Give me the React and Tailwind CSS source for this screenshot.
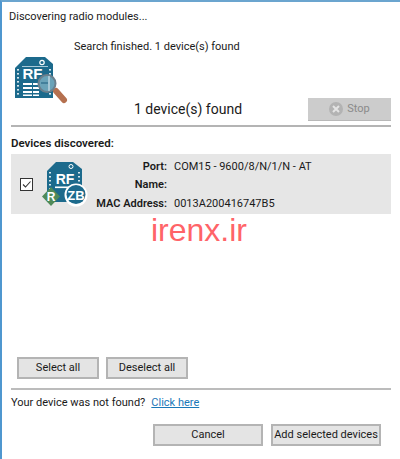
import React from "react";

const font = { fontFamily: 'Roboto, "Open Sans", sans-serif' };

function SearchIcon() {
  return (
    <svg width="62" height="60" viewBox="0 0 62 60">
      <path d="M1 14 L12 3 H31 L39 10 V44 H1 Z" fill="#1c6a8c" />
      <circle cx="28" cy="8.5" r="2.2" fill="none" stroke="#fff" strokeWidth="1.2" />
      <rect x="8" y="12" width="26" height="1" fill="#a8c9d8" />
      {[15, 19, 23, 27, 31, 35, 39].map((y) => (
        <g key={y}>
          <rect x="3" y={y} width="2" height="1.6" fill="#d7e7ee" />
          <rect x="35" y={y} width="2" height="1.6" fill="#d7e7ee" />
        </g>
      ))}
      <text x="18.5" y="25" textAnchor="middle" fontSize="15" fontWeight="700" fill="#fff" fontFamily="Liberation Sans">RF</text>
      <rect x="9" y="29" width="9" height="2" fill="#fff" />
      <rect x="9" y="33" width="9" height="2" fill="#fff" />
      <rect x="9" y="37" width="9" height="2" fill="#fff" />
      <rect x="9" y="40.5" width="9" height="1.5" fill="#fff" />
      <rect x="19" y="29" width="6" height="2" fill="#fff" />
      <rect x="19" y="33" width="6" height="2" fill="#fff" />
      <rect x="19" y="37" width="6" height="2" fill="#fff" />
      <rect x="19" y="40.5" width="6" height="1.5" fill="#fff" />
      <line x1="42" y1="37" x2="50" y2="46" stroke="#b5704f" strokeWidth="6" strokeLinecap="round" />
      <circle cx="33" cy="29.5" r="8.5" fill="#6aa3b8" stroke="#6b7f8c" strokeWidth="2" />
      <rect x="34.4" y="22" width="1.2" height="15" fill="#cfe2ea" />
      <rect x="27" y="28.5" width="7" height="1" fill="#1c5f7e" />
    </svg>
  );
}

function DeviceIcon() {
  return (
    <svg width="48" height="46" viewBox="0 0 48 46">
      <path d="M5 10 L14 1 H31 L40 8 V41 H5 Z" fill="#1c6a8c" />
      <circle cx="29" cy="5.5" r="2" fill="none" stroke="#fff" strokeWidth="1" />
      {[11, 15, 19, 23, 27].map((y) => (
        <g key={y}>
          <rect x="7" y={y} width="2" height="1.5" fill="#d7e7ee" />
          <rect x="36" y={y} width="2" height="1.5" fill="#d7e7ee" />
        </g>
      ))}
      <text x="23" y="23" textAnchor="middle" fontSize="14" fontWeight="700" fill="#fff" fontFamily="Liberation Sans">RF</text>
      <rect x="13" y="25.5" width="20" height="1.6" fill="#fff" />
      <path d="M9 26 L18 35.5 L9 45 L0 35.5 Z" fill="#4f8a58" />
      <text x="9" y="40" textAnchor="middle" fontSize="12" fontWeight="700" fill="#fff" fontFamily="Liberation Sans">R</text>
      <circle cx="34" cy="34" r="11.5" fill="#fff" />
      <circle cx="34" cy="33.5" r="9.5" fill="#1c6a8c" />
      <text x="34" y="38.5" textAnchor="middle" fontSize="13" fontWeight="700" fill="#fff" fontFamily="Liberation Sans">ZB</text>
    </svg>
  );
}

function Btn({ className, children }) {
  return (
    <div className={"h-[22px] flex items-center justify-center whitespace-nowrap bg-[#e4e4e4] border-2 border-[#b4b4b4] text-[11px] text-[#1a1a1a] " + className}>
      {children}
    </div>
  );
}

export default function App() {
  return (
    <div style={font} className="relative w-[400px] h-[459px] bg-white overflow-hidden border-t-2 border-t-[#6ba5cf] border-l-2 border-l-[#4f97cf] flex flex-col text-[#1a1a1a]">
      <div className="pl-[7px] pt-[7px] text-[11px] leading-4">Discovering radio modules...</div>
      <div className="pl-[72px] pt-[14px] text-[11px] leading-4">Search finished. 1 device(s) found</div>
      <div className="flex h-[66px] pl-[12px] pr-[9px] -mt-[1px]">
        <div className="w-[62px]"><SearchIcon /></div>
        <div className="flex-1 flex flex-col justify-end">
          <div className="flex items-end justify-between">
            <div className="text-[14px] leading-5 pl-[58px] pb-[1px]">1 device(s) found</div>
            <div className="w-[83px] h-[22px] bg-[#cccccc] shadow-[0_1px_0_#b8b8b8] flex items-center justify-center gap-1 text-[11px] text-[#8a8a8a]">
              <span className="w-[14px] h-[14px] rounded-full bg-[#b3b3b3] flex items-center justify-center">
                <svg width="8" height="8" viewBox="0 0 8 8"><path d="M1 1 L7 7 M7 1 L1 7" stroke="#e4e4e4" strokeWidth="2" /></svg>
              </span>
              Stop
            </div>
          </div>
        </div>
      </div>
      <div className="mx-[9px] mt-[5px] h-[2px] bg-[#b4b4b4] w-[380px]"></div>
      <div className="pl-[9px] pt-[8px] text-[11.5px] leading-4 font-semibold">Devices discovered:</div>
      <div className="ml-[9px] mt-[3px] w-[380px] h-[60px] bg-[#e6e6e6] flex items-center">
        <div className="ml-[9px] w-[13px] h-[13px] border border-[#333] bg-white flex items-center justify-center">
          <svg width="11" height="11" viewBox="0 0 11 11"><path d="M2 5.5 L4.5 8 L9.5 2.5" fill="none" stroke="#333" strokeWidth="1.1" /></svg>
        </div>
        <div className="ml-[9px]"><DeviceIcon /></div>
        <div className="ml-[4px] pt-[3px] flex flex-col text-[11px] leading-[18.5px]">
          <div className="flex"><span className="w-[73px] text-right font-semibold whitespace-nowrap">Port:</span><span className="ml-[7px] whitespace-nowrap">COM15 - 9600/8/N/1/N - AT</span></div>
          <div className="flex"><span className="w-[73px] text-right font-semibold whitespace-nowrap">Name:</span></div>
          <div className="flex"><span className="w-[73px] flex justify-end font-semibold whitespace-nowrap">MAC Address:</span><span className="ml-[7px] whitespace-nowrap">0013A200416747B5</span></div>
        </div>
      </div>
      <div className="flex-1"></div>
      <div className="flex gap-[7px] pl-[15px]">
        <Btn className="w-[82px]">Select all</Btn>
        <Btn className="w-[82px]">Deselect all</Btn>
      </div>
      <div className="mx-[9px] mt-[9px] h-[2px] bg-[#bcbcbc] w-[380px]"></div>
      <div className="pl-[9px] pt-[5px] text-[11px] leading-4 flex">
        <span>Your device was not found?</span>
        <span className="ml-[6px] text-[#1a78b8] underline">Click here</span>
      </div>
      <div className="flex justify-end gap-[8px] pr-[19px] pt-[13px] pb-[13px]">
        <Btn className="w-[110px]">Cancel</Btn>
        <Btn className="w-[110px]">Add selected devices</Btn>
      </div>
      <div className="absolute left-[149px] top-[210px] text-[32px] leading-9 text-[#ff6468]" style={{ fontFamily: '"Liberation Sans", sans-serif' }}>irenx.ir</div>
    </div>
  );
}
